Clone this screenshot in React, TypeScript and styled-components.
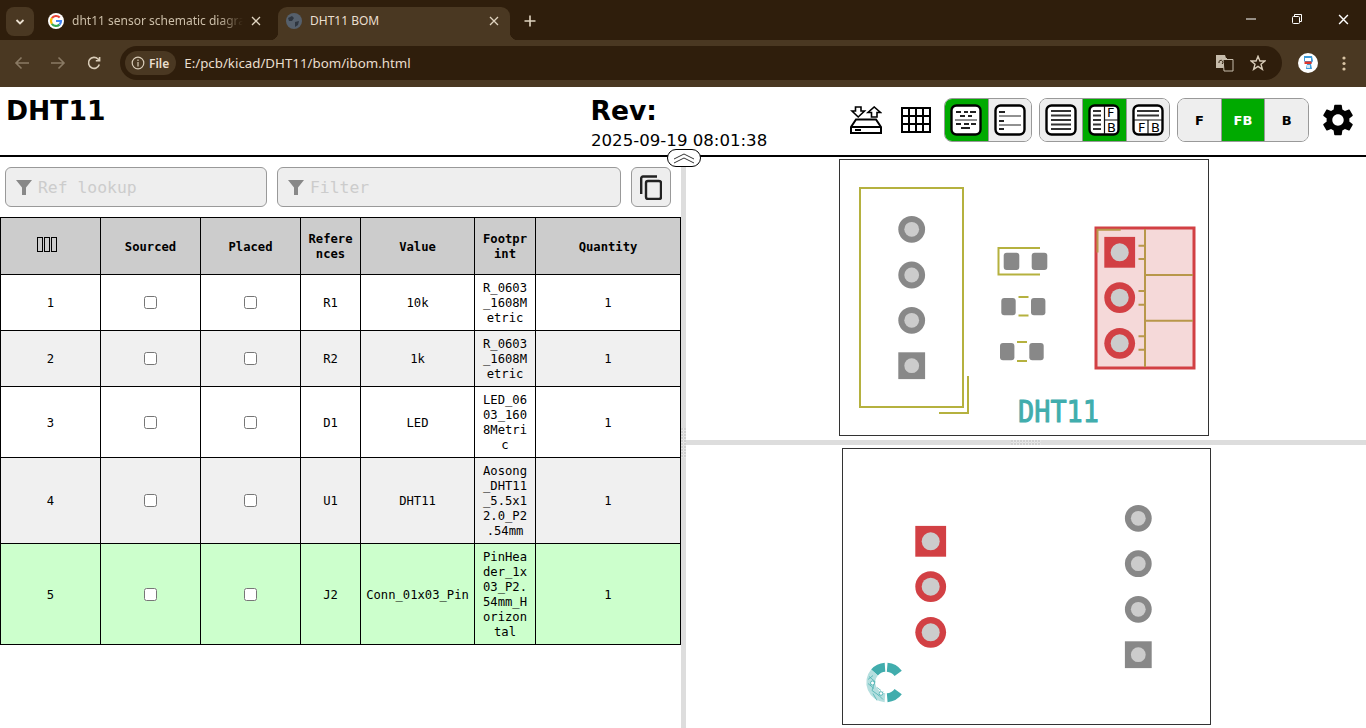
import React, { FC } from 'react';
import styled, { createGlobalStyle } from 'styled-components';
import { MdSettings } from 'react-icons/md';

const GlobalStyle = createGlobalStyle`
  html, body {
    margin: 0;
    padding: 0;
    height: 100%;
    overflow: hidden;
    background: #fff;
    font-family: "DejaVu Sans", sans-serif;
  }
`;

const Screen = styled.div`
  display: flex;
  flex-direction: column;
  width: 1366px;
  height: 728px;
  overflow: hidden;
`;

/* browser chrome */
const TabStrip = styled.div`
  display: flex;
  align-items: flex-end;
  height: 40px;
  padding-left: 6px;
  box-sizing: border-box;
  background: #2f1e0c;
  font-family: "Noto Sans", sans-serif;
  font-size: 12px;
`;

const TabMenu = styled.div`
  display: flex;
  align-items: center;
  justify-content: center;
  width: 28px;
  height: 29px;
  margin: 0 6px 4px 0;
  border-radius: 8px;
  background: #4a3822;
`;

const Tab = styled.div<{ $active?: boolean }>`
  position: relative;
  display: flex;
  align-items: center;
  gap: 8px;
  width: 232px;
  height: 33px;
  margin-right: 6px;
  padding: 0 11px 6px 8px;
  box-sizing: border-box;
  border-radius: 9px 9px 0 0;
  color: ${p => (p.$active ? '#eadfcf' : '#cdbfa9')};
  background: ${p => (p.$active ? '#4a3822' : 'transparent')};

  ${p => p.$active && `
    &::before, &::after {
      content: '';
      position: absolute;
      bottom: 0;
      width: 8px;
      height: 8px;
    }
    &::before {
      left: -8px;
      background: radial-gradient(circle at 0 0, transparent 8px, #4a3822 8.5px);
    }
    &::after {
      right: -8px;
      background: radial-gradient(circle at 100% 0, transparent 8px, #4a3822 8.5px);
    }
  `}
`;

const TabTitle = styled.span<{ $fade?: boolean }>`
  flex: 1;
  overflow: hidden;
  white-space: nowrap;
  ${p => p.$fade && `
    -webkit-mask-image: linear-gradient(to right, #000 86%, transparent 100%);
    mask-image: linear-gradient(to right, #000 86%, transparent 100%);
  `}
`;

const NewTab = styled.div`
  display: flex;
  align-items: center;
  justify-content: center;
  width: 28px;
  height: 28px;
  margin: 0 0 5px 0;
`;

const WindowControls = styled.div`
  display: flex;
  align-self: stretch;
  margin-left: auto;
`;

const WindowButton = styled.div`
  display: flex;
  align-items: center;
  justify-content: center;
  width: 46px;
  padding-bottom: 2px;
`;

const Toolbar = styled.div`
  display: flex;
  align-items: center;
  height: 47px;
  padding: 0 4px 1px;
  box-sizing: border-box;
  background: #4a3822;
  font-family: "Noto Sans", sans-serif;
`;

const NavButton = styled.div`
  display: flex;
  align-items: center;
  justify-content: center;
  width: 36px;
  height: 34px;
`;

const Omnibox = styled.div`
  display: flex;
  align-items: center;
  flex: 1;
  height: 34px;
  margin-left: 8px;
  padding: 0 16px 0 5px;
  border-radius: 17px;
  background: #2f1e0c;
  color: #eadfcf;
  font-size: 13.3px;
`;

const FileChip = styled.div`
  display: flex;
  align-items: center;
  gap: 4px;
  height: 24px;
  padding: 0 7px 0 6px;
  margin-right: 8px;
  border-radius: 12px;
  background: #4a3822;
  font-size: 12px;
  font-weight: 600;
`;

const OmniActions = styled.div`
  display: flex;
  align-items: center;
  gap: 16px;
  margin-left: auto;
`;

const ToolbarEnd = styled.div`
  display: flex;
  align-items: center;
  gap: 24px;
  width: 80px;
  padding-left: 16px;
  box-sizing: border-box;
`;

/* page header */
const PageHeader = styled.header`
  display: flex;
  height: 70px;
  box-sizing: border-box;
  border-bottom: 2px solid #000;
  color: #000;
`;

const TitleBlock = styled.div`
  width: 590.5px;
  padding: 9px 0 0 6px;
  box-sizing: border-box;
`;

const BigTitle = styled.div`
  font-size: 26.6px;
  font-weight: 700;
  line-height: 30px;
`;

const RevBlock = styled.div`
  padding-top: 9px;
`;

const RevDate = styled.div`
  margin-top: 5px;
  padding-left: 0.5px;
  font-size: 16.6px;
  line-height: 20px;
  white-space: nowrap;
`;

const HeaderTools = styled.div`
  display: flex;
  gap: 7px;
  height: 44px;
  margin: 11px 6px 0 auto;
`;

const IconSlot = styled.div<{ $nudge?: number }>`
  display: flex;
  align-items: center;
  justify-content: center;
  width: 44px;
  height: 44px;
  padding-left: ${p => p.$nudge ?? 0}px;
  box-sizing: border-box;
`;

const ButtonGroup = styled.div<{ $width: number }>`
  display: flex;
  width: ${p => p.$width}px;
  height: 44px;
  overflow: hidden;
  border: 1px solid #999;
  border-radius: 8px;
  box-sizing: border-box;
`;

const GroupButton = styled.div<{ $active?: boolean }>`
  display: flex;
  align-items: center;
  justify-content: center;
  flex: 1;
  box-sizing: border-box;
  background: ${p => (p.$active ? '#0a0' : '#eee')};
  color: ${p => (p.$active ? '#fff' : '#000')};
  font-size: 13px;
  font-weight: 700;

  & + & {
    border-left: 1px solid #999;
  }
`;

const CollapseButton = styled.div`
  position: absolute;
  top: 149px;
  left: 667px;
  display: flex;
  align-items: center;
  justify-content: center;
  width: 34px;
  height: 18px;
  box-sizing: border-box;
  border: 1px solid #000;
  border-radius: 9px;
  background: #fff;
  z-index: 2;
`;

/* body split */
const Body = styled.div`
  display: flex;
  flex: 1;
  min-height: 0;
`;

const LeftPane = styled.div`
  width: 681px;
  flex: none;
`;

const FilterRow = styled.div`
  display: flex;
  gap: 10px;
  padding: 10px 10px 10px 5px;
`;

const FilterInput = styled.div<{ $width: number }>`
  display: flex;
  align-items: center;
  gap: 6px;
  width: ${p => p.$width}px;
  height: 40px;
  padding-left: 10px;
  box-sizing: border-box;
  border: 1px solid #999;
  border-radius: 6px;
  background: #eee;
  color: #ccc;
  font-family: "DejaVu Sans Mono", monospace;
  font-size: 16.4px;
`;

const CopyButton = styled.div`
  display: flex;
  align-items: center;
  justify-content: center;
  width: 40px;
  height: 40px;
  box-sizing: border-box;
  border: 1px solid #999;
  border-radius: 6px;
  background: #eee;
`;

const BomTable = styled.table`
  width: 681px;
  table-layout: fixed;
  border-collapse: collapse;
  color: #000;
  font-family: "DejaVu Sans Mono", monospace;
  font-size: 12.2px;
  line-height: 15px;
  text-align: center;
`;

const BomRow = styled.tr<{ $tone: 'plain' | 'even' | 'hit' }>`
  background: ${p => ({ plain: '#fff', even: '#f0f0f0', hit: '#cfc' }[p.$tone])};
`;

const HeadCell = styled.th`
  height: 46px;
  padding: 6px 5px 4px;
  border: 1px solid #000;
  background: #ccc;
  font-weight: 700;
  word-break: break-all;
  line-break: anywhere;
`;

const Cell = styled.td`
  padding: 6px 5px 4px;
  border: 1px solid #000;
  word-break: break-all;
  line-break: anywhere;
`;

const TofuRow = styled.span`
  display: inline-flex;
  gap: 1px;
  margin: 0 7px 5px 0;
  vertical-align: middle;
`;

const Tofu = styled.span`
  width: 6px;
  height: 15px;
  border: 1px solid #000;
  box-sizing: border-box;
`;

const Tick = styled.input`
  display: block;
  margin: -2px auto 0;
`;

const VGutter = styled.div`
  display: flex;
  align-items: center;
  justify-content: center;
  width: 5px;
  flex: none;
  background: #ddd;
`;

const HGutter = styled.div`
  display: flex;
  align-items: center;
  justify-content: center;
  height: 5px;
  flex: none;
  background: #ddd;
`;

const Grip = styled.div<{ $vertical?: boolean }>`
  width: ${p => (p.$vertical ? '5px' : '30px')};
  height: ${p => (p.$vertical ? '30px' : '5px')};
  background-image: repeating-linear-gradient(to right, #e6e6e6 0 2px, transparent 2px 3px),
    repeating-linear-gradient(to bottom, #e6e6e6 0 2px, transparent 2px 3px);
  background-blend-mode: multiply;
`;

const RightPane = styled.div`
  display: flex;
  flex-direction: column;
  flex: 1;
`;

const Canvas = styled.svg`
  display: block;
  width: 680px;
  height: 283px;
  flex: none;
`;

const SILK = '#b5b13f';
const FAB = '#b8974a';
const GRAY = '#888';
const RED = '#d24044';
const HOLE = '#ccc';
const TEAL = '#41adad';

const Hole: FC<{ x: number; y: number; r: number }> = ({ x, y, r }) => <circle cx={x} cy={y} r={r} fill={HOLE} />;

const RoundPad: FC<{ x: number; y: number; r: number; hole: number; color: string }> = ({ x, y, r, hole, color }) => (
  <>
    <circle cx={x} cy={y} r={r} fill={color} />
    <Hole x={x} y={y} r={hole} />
  </>
);

const SquarePad: FC<{ x: number; y: number; r: number; hole: number; color: string }> = ({ x, y, r, hole, color }) => (
  <>
    <rect x={x - r} y={y - r} width={r * 2} height={r * 2} fill={color} />
    <Hole x={x} y={y} r={hole} />
  </>
);

const SmdPad: FC<{ x: number; y: number; w: number; h: number }> = ({ x, y, w, h }) => (
  <rect x={x} y={y} width={w} height={h} rx={3} fill={GRAY} />
);

const FrontBoard: FC = () => (
  <Canvas viewBox="686 157 680 283">
    <rect x={839.5} y={159.5} width={369} height={276} fill="none" stroke="#333" />
    <g fill="none" stroke={SILK} strokeWidth={2}>
      <rect x={860} y={188} width={103} height={219} />
      <path d="M968 376V413H939" />
      <path d="M1040 248H998.5V274.5H1040" />
      <path d="M1018.5 297H1028.5M1018.5 315.5H1028.5" />
      <path d="M1017 342H1027M1017 361H1027" />
    </g>
    <RoundPad x={911.7} y={229.3} r={13.4} hole={7.4} color={GRAY} />
    <RoundPad x={911.7} y={275} r={13.4} hole={7.4} color={GRAY} />
    <RoundPad x={911.7} y={320.3} r={13.4} hole={7.4} color={GRAY} />
    <SquarePad x={911.7} y={365.7} r={13.4} hole={7.4} color={GRAY} />
    <SmdPad x={1003.7} y={252.7} w={15.6} h={17.3} />
    <SmdPad x={1031.7} y={252.7} w={15.6} h={17.3} />
    <SmdPad x={1001.3} y={298} w={14.4} h={17.3} />
    <SmdPad x={1031} y={298} w={14.4} h={17.3} />
    <SmdPad x={1000} y={343} w={14.4} h={17.3} />
    <SmdPad x={1029.3} y={343} w={14.4} h={17.3} />
    <rect x={1096} y={228} width={98} height={140} fill="#f5d9d9" stroke={RED} strokeWidth={3} />
    <g fill="none" stroke={FAB} strokeWidth={2}>
      <path d="M1145 229V367M1145 275H1193M1145 320.7H1193" />
      <path d="M1138.5 245.7H1145M1138.5 259H1145M1138.5 291H1145M1138.5 304.7H1145M1138.5 336.3H1145M1138.5 349.7H1145" />
      <path d="M1097.5 252.5V229.7H1120.7" />
    </g>
    <SquarePad x={1119.7} y={252.3} r={15.4} hole={9} color={RED} />
    <RoundPad x={1119.7} y={297.7} r={15.4} hole={9} color={RED} />
    <RoundPad x={1119.7} y={343.3} r={15.4} hole={9} color={RED} />
    <text
      x={1018}
      y={421.5}
      fill={TEAL}
      stroke={TEAL}
      strokeWidth={1}
      strokeLinejoin="round"
      fontFamily="DejaVu Sans Mono"
      fontWeight={400}
      fontSize={30}
      textLength={81}
      lengthAdjust="spacingAndGlyphs"
    >
      DHT11
    </text>
  </Canvas>
);

const BackBoard: FC = () => (
  <Canvas viewBox="686 445 680 283">
    <rect x={842.5} y={448.5} width={368} height={276} fill="none" stroke="#333" />
    <SquarePad x={930.7} y={541.3} r={15.4} hole={9} color={RED} />
    <RoundPad x={930.7} y={586.7} r={15.4} hole={9} color={RED} />
    <RoundPad x={930.7} y={632.3} r={15.4} hole={9} color={RED} />
    <RoundPad x={1138.3} y={518.3} r={13.4} hole={7.4} color={GRAY} />
    <RoundPad x={1138.3} y={563.7} r={13.4} hole={7.4} color={GRAY} />
    <RoundPad x={1138.3} y={609.3} r={13.4} hole={7.4} color={GRAY} />
    <SquarePad x={1138.3} y={654.7} r={13.4} hole={7.4} color={GRAY} />
    <g transform="translate(886 682.5)" fill="none">
      <path d="M1.2 -15.2A15.3 15.3 0 0 1 12.2 -9.1" stroke={TEAL} strokeWidth={9} />
      <path d="M1.2 15.2A15.3 15.3 0 0 0 12.2 9.1" stroke={TEAL} strokeWidth={9} />
      <path d="M-1 -15.2A15.3 15.3 0 0 0 -11.5 -10" stroke={TEAL} strokeWidth={9} />
      <path d="M-11.5 -10A15.3 15.3 0 0 0 -1 15.2" stroke="#b5dfdf" strokeWidth={9} />
      <path
        d="M-17 -6L-11 -1L-16 3M-11 -1L-14 8L-7 13L-3 9M-7 13L-3 17M-18 1L-12 6M-9 5L-5 8M-18 -3L-13 -7M-13 11L-9 18"
        stroke={TEAL}
        strokeWidth={0.7}
      />
      <circle cx={-13.5} cy={0.5} r={2} stroke={TEAL} strokeWidth={0.8} fill="#fff" />
      <circle cx={-5} cy={11} r={1.8} stroke={TEAL} strokeWidth={0.8} fill="#fff" />
    </g>
  </Canvas>
);

const GoogleIcon: FC = () => (
  <svg width="16" height="16" viewBox="0 0 16 16">
    <circle cx="8" cy="8" r="8" fill="#fff" />
    <g fill="none" strokeWidth="2.2">
      <path d="M11.7 4.6A5 5 0 0 0 3.9 5.2" stroke="#ea4335" />
      <path d="M3.9 5.2A5 5 0 0 0 3.9 10.8" stroke="#fbbc05" />
      <path d="M3.9 10.8A5 5 0 0 0 11.5 11.6" stroke="#34a853" />
      <path d="M11.5 11.6A5 5 0 0 0 13 8H8" stroke="#4285f4" />
    </g>
  </svg>
);

const GlobeIcon: FC = () => (
  <svg width="16" height="16" viewBox="0 0 16 16">
    <circle cx="8" cy="8" r="8" fill="#56606c" />
    <path d="M2 5L6 3L8 5L6 8L3 8ZM9 9L13 8L12 12L9 14Z" fill="#2f3640" />
  </svg>
);

const CloseIcon: FC<{ size?: number; color?: string }> = ({ size = 10, color = '#e0d4c0' }) => (
  <svg width={size} height={size} viewBox="0 0 10 10">
    <path d="M1 1L9 9M9 1L1 9" stroke={color} strokeWidth="1.3" fill="none" />
  </svg>
);

const Doraemon: FC = () => (
  <svg width="20" height="20" viewBox="0 0 20 20">
    <circle cx="10" cy="10" r="10" fill="#fff" />
    <path d="M6 3H14L15 8L13 11L14 16H8L9 11L6 8Z" fill="#3d9ad8" />
    <rect x="7" y="5" width="6" height="3" fill="#fff" />
    <rect x="6.5" y="8.5" width="7" height="2.5" fill="#e0352b" />
    <rect x="9" y="12" width="3" height="3" fill="#cfe8f7" />
  </svg>
);

const Funnel: FC = () => (
  <svg width="16" height="17" viewBox="0 0 16 17">
    <path d="M0 1H16L10 8.5V16H6V8.5Z" fill="#888" />
  </svg>
);

const TransferIcon: FC = () => (
  <svg width="32" height="28" viewBox="0 0 32 28" fill="none" stroke="#000" strokeWidth="2">
    <path d="M5.5 1H11V5H14.5L8.2 11L2 5H5.5Z" strokeWidth="1.6" />
    <path d="M21.5 11H27V6.5H30.5L24.2 1L18 6.5H21.5Z" strokeWidth="1.6" />
    <path d="M6 13.5H26L31 21V27H1V21ZM1 21H31M5 24H11" />
  </svg>
);

const GridIcon: FC = () => (
  <svg width="30" height="26" viewBox="0 0 30 26" fill="none" stroke="#000" strokeWidth="2">
    <path d="M1 1H29V25H1ZM8 1V25M15 1V25M22 1V25M1 9H29M1 17H29" />
  </svg>
);

const IconFrame: FC<{ children: React.ReactNode }> = ({ children }) => (
  <svg width="32" height="32" viewBox="0 0 32 32" fill="none">
    <rect x="1.5" y="1.5" width="29" height="29" rx="5" fill="#fff" stroke="#000" strokeWidth="2.4" />
    {children}
  </svg>
);

const UngroupedIcon: FC = () => (
  <IconFrame>
    <path
      d="M6 8H11M14 8H18M20 8H26M10 12H15M18 12H22"
      stroke="#222"
      strokeWidth="2"
    />
    <path d="M5 16H27" stroke="#222" strokeWidth="1" />
    <path d="M6 20H11M14 20H19M21 20H26M11 24H20" stroke="#222" strokeWidth="2" />
  </IconFrame>
);

const GroupedIcon: FC = () => (
  <IconFrame>
    <path d="M5 8H11M5 17H10M5 25H10" stroke="#222" strokeWidth="2" />
    <path d="M5 12H27M5 21H27" stroke="#222" strokeWidth="1" />
  </IconFrame>
);

const BomOnlyIcon: FC = () => (
  <IconFrame>
    <path d="M6 7H26M6 11.5H26M6 16H26M6 20.5H26M6 25H26" stroke="#333" strokeWidth="2" />
  </IconFrame>
);

const BomLeftIcon: FC = () => (
  <IconFrame>
    <path d="M5 7H13M5 11.5H13M5 16H13M5 20.5H13M5 25H13" stroke="#333" strokeWidth="2" />
    <path d="M16.5 2V30M16.5 16H30" stroke="#111" strokeWidth="1.2" />
    <text x="19" y="13" fontSize="13" fontWeight="400" fill="#000" stroke="none">F</text>
    <text x="19" y="27.5" fontSize="13" fontWeight="400" fill="#000" stroke="none">B</text>
  </IconFrame>
);

const BomTopIcon: FC = () => (
  <IconFrame>
    <path d="M5 7H27M5 11.5H27" stroke="#333" strokeWidth="2" />
    <path d="M2 16H30M16 16V30" stroke="#111" strokeWidth="1.2" />
    <text x="6" y="27.5" fontSize="13" fontWeight="400" fill="#000" stroke="none">F</text>
    <text x="19" y="27.5" fontSize="13" fontWeight="400" fill="#000" stroke="none">B</text>
  </IconFrame>
);

interface IBomEntry {
  ref: string;
  value: string;
  footprint: string;
  tone: 'plain' | 'even' | 'hit';
}

const entries: IBomEntry[] = [
  { ref: 'R1', value: '10k', footprint: 'R_0603_1608Metric', tone: 'plain' },
  { ref: 'R2', value: '1k', footprint: 'R_0603_1608Metric', tone: 'even' },
  { ref: 'D1', value: 'LED', footprint: 'LED_0603_1608Metric', tone: 'plain' },
  { ref: 'U1', value: 'DHT11', footprint: 'Aosong_DHT11_5.5x12.0_P2.54mm', tone: 'even' },
  { ref: 'J2', value: 'Conn_01x03_Pin', footprint: 'PinHeader_1x03_P2.54mm_Horizontal', tone: 'hit' },
];

const App: FC = () => (
  <Screen>
    <GlobalStyle />
    <TabStrip>
      <TabMenu>
        <svg width="10" height="8" viewBox="0 0 10 8">
          <path d="M1.5 2L5 5.5L8.5 2" stroke="#eadfcf" strokeWidth="1.8" fill="none" />
        </svg>
      </TabMenu>
      <Tab>
        <GoogleIcon />
        <TabTitle $fade>dht11 sensor schematic diagram</TabTitle>
        <CloseIcon />
      </Tab>
      <Tab $active>
        <GlobeIcon />
        <TabTitle>DHT11 BOM</TabTitle>
        <CloseIcon />
      </Tab>
      <NewTab>
        <svg width="12" height="12" viewBox="0 0 12 12">
          <path d="M6 0.5V11.5M0.5 6H11.5" stroke="#e0d4c0" strokeWidth="1.6" />
        </svg>
      </NewTab>
      <WindowControls>
        <WindowButton>
          <svg width="10" height="2" viewBox="0 0 10 2">
            <path d="M0 1H10" stroke="#fff" />
          </svg>
        </WindowButton>
        <WindowButton>
          <svg width="10" height="10" viewBox="0 0 10 10" fill="none" stroke="#fff">
            <path d="M2.5 2.5V0.5H9.5V7.5H7.5" />
            <rect x="0.5" y="2.5" width="7" height="7" rx="1" />
          </svg>
        </WindowButton>
        <WindowButton>
          <CloseIcon size={11} color="#fff" />
        </WindowButton>
      </WindowControls>
    </TabStrip>
    <Toolbar>
      <NavButton>
        <svg width="16" height="14" viewBox="0 0 16 14" fill="none" stroke="#8a7a64" strokeWidth="1.6">
          <path d="M15 7H2M7.5 1.5L2 7L7.5 12.5" />
        </svg>
      </NavButton>
      <NavButton>
        <svg width="16" height="14" viewBox="0 0 16 14" fill="none" stroke="#8a7a64" strokeWidth="1.6">
          <path d="M1 7H14M8.5 1.5L14 7L8.5 12.5" />
        </svg>
      </NavButton>
      <NavButton>
        <svg width="14" height="14" viewBox="0 0 14 14" fill="none" stroke="#d9ccb8" strokeWidth="1.6">
          <path d="M12.3 8.5A5.5 5.5 0 1 1 11 3L12.6 4.6M12.6 1V4.8H8.8" />
        </svg>
      </NavButton>
      <Omnibox>
        <FileChip>
          <svg width="14" height="14" viewBox="0 0 14 14" fill="none" stroke="#d9ccb8" strokeWidth="1.2">
            <circle cx="7" cy="7" r="5.8" />
            <path d="M7 6V10.5M7 3.5V5" />
          </svg>
          File
        </FileChip>
        E:/pcb/kicad/DHT11/bom/ibom.html
        <OmniActions>
          <svg width="18" height="17" viewBox="0 0 18 17">
            <path d="M0 0H9L10 3H11V13H0Z" fill="#c7bcab" />
            <path d="M7 4.5H17V16H8Z" fill="#2f1e0c" stroke="#c7bcab" />
            <path d="M3 8A2 2 0 1 1 6 9M10 8H15M12.5 7L13 13M14.5 8L10.5 13" stroke="#2f1e0c" fill="none" />
          </svg>
          <svg width="16" height="16" viewBox="0 0 16 16">
            <path
              d="M8 1.3L9.9 6H15L11 9.2L12.4 14.4L8 11.4L3.6 14.4L5 9.2L1 6H6.1Z"
              fill="none"
              stroke="#d9ccb8"
              strokeWidth="1.4"
            />
          </svg>
        </OmniActions>
      </Omnibox>
      <ToolbarEnd>
        <Doraemon />
        <svg width="4" height="15" viewBox="0 0 4 15" fill="#d9c4a4">
          <circle cx="2" cy="2" r="1.6" />
          <circle cx="2" cy="7.5" r="1.6" />
          <circle cx="2" cy="13" r="1.6" />
        </svg>
      </ToolbarEnd>
    </Toolbar>
    <PageHeader>
      <TitleBlock>
        <BigTitle>DHT11</BigTitle>
      </TitleBlock>
      <RevBlock>
        <BigTitle>Rev:</BigTitle>
        <RevDate>2025-09-19 08:01:38</RevDate>
      </RevBlock>
      <HeaderTools>
        <IconSlot $nudge={4}>
          <TransferIcon />
        </IconSlot>
        <IconSlot $nudge={2}>
          <GridIcon />
        </IconSlot>
        <ButtonGroup $width={88}>
          <GroupButton $active>
            <UngroupedIcon />
          </GroupButton>
          <GroupButton>
            <GroupedIcon />
          </GroupButton>
        </ButtonGroup>
        <ButtonGroup $width={131}>
          <GroupButton>
            <BomOnlyIcon />
          </GroupButton>
          <GroupButton $active>
            <BomLeftIcon />
          </GroupButton>
          <GroupButton>
            <BomTopIcon />
          </GroupButton>
        </ButtonGroup>
        <ButtonGroup $width={132}>
          <GroupButton>F</GroupButton>
          <GroupButton $active>FB</GroupButton>
          <GroupButton>B</GroupButton>
        </ButtonGroup>
        <IconSlot>
          <MdSettings size={38} color="#000" />
        </IconSlot>
      </HeaderTools>
    </PageHeader>
    <CollapseButton>
      <svg width="24" height="11" viewBox="0 0 24 11" fill="none" stroke="#333" strokeWidth="1">
        <path d="M2 6L12 1L22 6M2 10L12 5L22 10" />
      </svg>
    </CollapseButton>
    <Body>
      <LeftPane>
        <FilterRow>
          <FilterInput $width={262}>
            <Funnel />
            Ref lookup
          </FilterInput>
          <FilterInput $width={344}>
            <Funnel />
            Filter
          </FilterInput>
          <CopyButton>
            <svg width="22" height="25" viewBox="0 0 22 25" fill="none" stroke="#222" strokeWidth="2.4">
              <path d="M17 1.5H3A1.8 1.8 0 0 0 1.2 3.3V19" />
              <rect x="6" y="6" width="15" height="18" rx="2" />
            </svg>
          </CopyButton>
        </FilterRow>
        <BomTable>
          <colgroup>
            <col style={{ width: 100 }} />
            <col style={{ width: 100 }} />
            <col style={{ width: 100 }} />
            <col style={{ width: 60 }} />
            <col style={{ width: 114 }} />
            <col style={{ width: 61 }} />
            <col style={{ width: 145 }} />
          </colgroup>
          <thead>
            <tr>
              <HeadCell>
                <TofuRow>
                  <Tofu />
                  <Tofu />
                  <Tofu />
                </TofuRow>
              </HeadCell>
              <HeadCell>Sourced</HeadCell>
              <HeadCell>Placed</HeadCell>
              <HeadCell>References</HeadCell>
              <HeadCell>Value</HeadCell>
              <HeadCell>Footprint</HeadCell>
              <HeadCell>Quantity</HeadCell>
            </tr>
          </thead>
          <tbody>
            {entries.map((entry, i) => (
              <BomRow key={entry.ref} $tone={entry.tone}>
                <Cell>{i + 1}</Cell>
                <Cell>
                  <Tick type="checkbox" />
                </Cell>
                <Cell>
                  <Tick type="checkbox" />
                </Cell>
                <Cell>{entry.ref}</Cell>
                <Cell>{entry.value}</Cell>
                <Cell>{entry.footprint}</Cell>
                <Cell>1</Cell>
              </BomRow>
            ))}
          </tbody>
        </BomTable>
      </LeftPane>
      <VGutter>
        <Grip $vertical />
      </VGutter>
      <RightPane>
        <FrontBoard />
        <HGutter>
          <Grip />
        </HGutter>
        <BackBoard />
      </RightPane>
    </Body>
  </Screen>
);

export default App;
